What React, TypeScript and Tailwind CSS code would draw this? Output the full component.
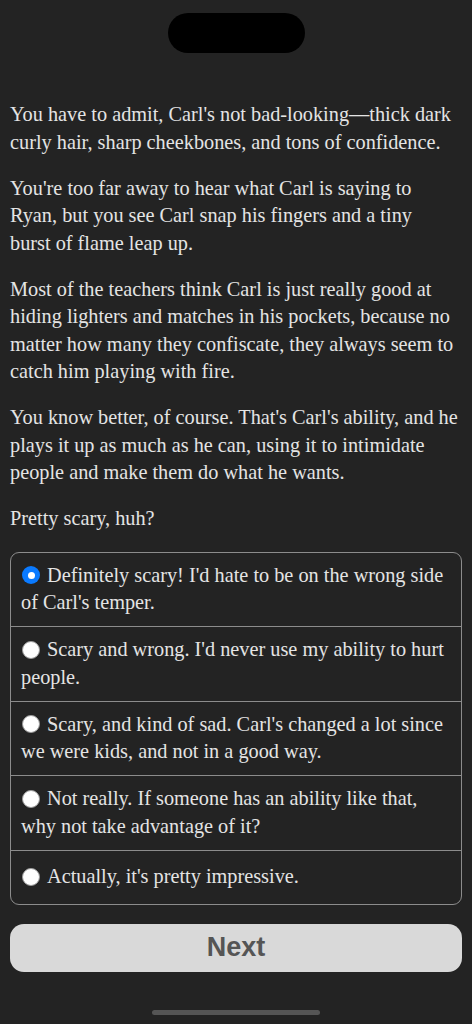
import React, { useState } from 'react';

const paragraphs: { text: string; className?: string }[] = [
  { text: "You have to admit, Carl's not bad-looking\u2014thick dark curly hair, sharp cheekbones, and tons of confidence." },
  {
    text: "You're too far away to hear what Carl is saying to Ryan, but you see Carl snap his fingers and a tiny burst of flame leap up.",
    className: 'max-w-[440px]',
  },
  { text: "Most of the teachers think Carl is just really good at hiding lighters and matches in his pockets, because no matter how many they confiscate, they always seem to catch him playing with fire." },
  { text: "You know better, of course. That's Carl's ability, and he plays it up as much as he can, using it to intimidate people and make them do what he wants." },
  { text: 'Pretty scary, huh?' },
];

const choices = [
  "Definitely scary! I'd hate to be on the wrong side of Carl's temper.",
  "Scary and wrong. I'd never use my ability to hurt people.",
  "Scary, and kind of sad. Carl's changed a lot since we were kids, and not in a good way.",
  'Not really. If someone has an ability like that, why not take advantage of it?',
  "Actually, it's pretty impressive.",
];

const Radio: React.FC<{ checked: boolean }> = ({ checked }) =>
  checked ? (
    <span className="mr-[7px] ml-[1px] inline-flex h-[18px] w-[18px] -translate-y-[2px] items-center justify-center rounded-full bg-[#0a7aff] align-middle">
      <span className="h-[7px] w-[7px] rounded-full bg-white" />
    </span>
  ) : (
    <span className="mr-[7px] ml-[1px] inline-block h-[18px] w-[18px] -translate-y-[2px] rounded-full border border-[#9a9a9a] bg-white align-middle" />
  );

export default function App() {
  const [selected, setSelected] = useState(0);

  return (
    <div className="flex min-h-[1024px] flex-col bg-[#232323] font-['Liberation_Serif',serif] text-[#e4e4e4]">
      {/* Dynamic island */}
      <div className="flex justify-center pt-[13px]">
        <div className="h-[40px] w-[137px] rounded-full bg-black" />
      </div>

      <div className="flex flex-col gap-[18.5px] px-[10px] pt-[48px] text-[20.3px] leading-[27.5px]">
        {paragraphs.map((p) => (
          <p key={p.text} className={p.className}>
            {p.text}
          </p>
        ))}
      </div>

      <div className="mx-[10px] mt-[19px] overflow-hidden rounded-[9px] border border-[#8c8c8c]">
        {choices.map((c, i) => (
          <div
            key={c}
            onClick={() => setSelected(i)}
            className="flex min-h-[53px] cursor-pointer items-center border-b border-[#8c8c8c] px-[10px] py-[9.25px] text-[20.3px] leading-[27.5px] last:border-b-0"
          >
            <p>
              <Radio checked={selected === i} />
              {c}
            </p>
          </div>
        ))}
      </div>

      <button className="mx-[10px] mt-[19px] h-[48px] rounded-[14px] bg-[#d9d9d9] font-['Liberation_Sans',sans-serif] text-[27px] font-bold text-[#555555]">
        Next
      </button>

      <div className="mt-auto flex justify-center pb-[9px]">
        <div className="h-[5px] w-[168px] rounded-full bg-[#555555]" />
      </div>
    </div>
  );
}
